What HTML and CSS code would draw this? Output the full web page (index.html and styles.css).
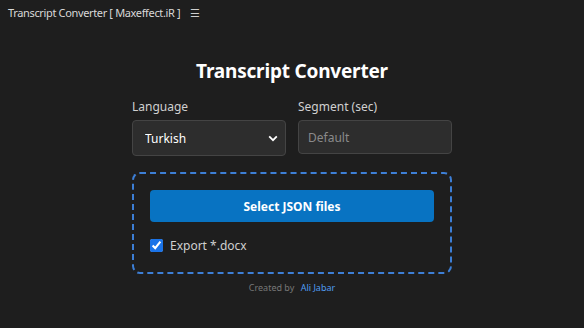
FILE: index.html
```html
<!DOCTYPE html>
<html lang="en">
<head>
  <meta charset="UTF-8" />
  <title>Transcript Converter</title>
  <link rel="stylesheet" href="styles.css">
</head>
<body>

  <div class="titlebar">
    <span class="app-name">Transcript Converter [ Maxeffect.iR ]</span>
    <span class="menu">&#9776;</span>
  </div>

  <main class="panel">
    <h1>Transcript Converter</h1>

    <div class="fields">
      <div class="field">
        <label for="language">Language</label>
        <div class="select-wrap">
          <select id="language">
            <option>Turkish</option>
            <option>English</option>
          </select>
          <svg class="chevron" width="10" height="7" viewBox="0 0 10 7"><path d="M1.2 1.4 L5 5.2 L8.8 1.4" fill="none" stroke="#fff" stroke-width="1.8"/></svg>
        </div>
      </div>
      <div class="field">
        <label for="segment">Segment (sec)</label>
        <input type="text" id="segment" placeholder="Default" />
      </div>
    </div>

    <div class="dropzone">
      <button class="pick">Select JSON files</button>
      <label class="check">
        <input type="checkbox" checked />
        <span>Export *.docx</span>
      </label>
    </div>

    <p class="credit">Created by <a href="#">Ali Jabar</a></p>
  </main>

</body>
</html>
```

FILE: styles.css
```css
body {
  margin: 0;
  background-color: #1e1e1e;
  color: #e6e6e6;
  font-family: 'Noto Sans', 'Open Sans', sans-serif;
}

.titlebar {
  height: 24px;
  display: flex;
  align-items: center;
  gap: 10px;
  padding-left: 8px;
  font-size: 11px;
  letter-spacing: -0.35px;
  color: #d8d8d8;
}

.menu {
  font-size: 11px;
  color: #cfcfcf;
}

.panel {
  width: 320px;
  margin: 0 auto;
}

h1 {
  margin: 33px 0 0;
  font-size: 19px;
  font-weight: 700;
  letter-spacing: -0.2px;
  text-align: center;
  color: #ffffff;
  line-height: 28px;
}

.fields {
  display: flex;
  gap: 12px;
  margin-top: 13px;
}

.field {
  flex: 1;
  display: flex;
  flex-direction: column;
}

.field label {
  font-size: 12px;
  color: #d0d0d0;
  line-height: 17px;
  margin-bottom: 5px;
}

.select-wrap {
  position: relative;
}

select, input[type="text"] {
  width: 100%;
  box-sizing: border-box;
  background-color: #2d2d2d;
  border: 1px solid #444444;
  border-radius: 4px;
  color: #ffffff;
  font-family: inherit;
  font-size: 12px;
  outline: none;
}

select {
  height: 36px;
  padding: 0 12px;
  appearance: none;
}

.chevron {
  position: absolute;
  right: 8px;
  top: 15px;
}

input[type="text"] {
  height: 34px;
  padding: 0 9px;
}

input::placeholder {
  color: #8a8a8a;
}

.dropzone {
  margin-top: 16px;
  border: 2px dashed #3d7fd6;
  border-radius: 8px;
  padding: 16px 16px 18px;
}

.pick {
  width: 100%;
  height: 32px;
  background-color: #0873c2;
  border: none;
  border-radius: 4px;
  color: #ffffff;
  font-family: inherit;
  font-size: 12px;
  font-weight: 700;
  cursor: pointer;
}

.check {
  display: flex;
  align-items: center;
  gap: 7px;
  margin-top: 15px;
  font-size: 12px;
  color: #d0d0d0;
}

.check input {
  margin: 0;
  width: 13px;
  height: 13px;
  accent-color: #1a73e8;
}

.credit {
  margin: 7px 0 0;
  text-align: center;
  font-size: 9px;
  color: #777777;
}

.credit a {
  margin-left: 4px;
  color: #4f9cf0;
  text-decoration: none;
}
```
